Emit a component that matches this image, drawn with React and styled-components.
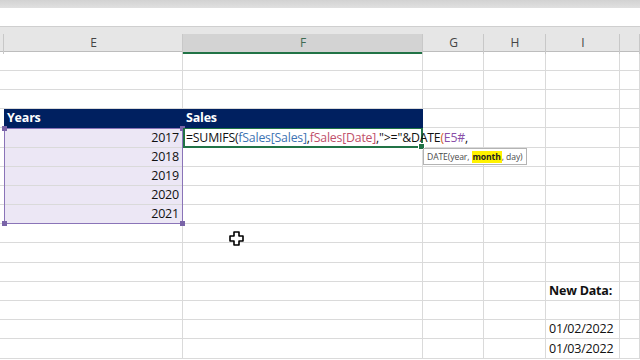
import React from 'react';
import styled, { createGlobalStyle } from 'styled-components';

const GlobalStyle = createGlobalStyle`
  html, body {
    margin: 0;
    padding: 0;
    background: #ffffff;
    overflow: hidden;
  }
  body {
    font-family: "Open Sans", "Liberation Sans", sans-serif;
  }
`;

const COLS = '4px 179px 240px 61px 62px 74px 1fr';
const ROW_HEIGHTS = [19, 19, 19, 19, 20, 19, 19, 19, 19, 19, 20, 19, 19, 19, 19, 20];

const Sheet = styled.div`
  position: relative;
  width: 640px;
  height: 360px;
  overflow: hidden;
  background: #ffffff;
`;

const Ribbon = styled.div`
  height: 8px;
  background: linear-gradient(#d2d2d2, #e0e0e0);
`;

const FormulaBand = styled.div`
  height: 18px;
  background: #ffffff;
  border-bottom: 1px solid #cfcfcf;
`;

const HeaderRow = styled.div`
  display: grid;
  grid-template-columns: ${COLS};
  height: 25px;
  background: #e6e6e6;
  border-bottom: 1px solid #bdbdbd;
  box-sizing: border-box;
`;

const ColHead = styled.div`
  position: relative;
  display: flex;
  align-items: flex-end;
  justify-content: center;
  padding-bottom: 3px;
  font-size: 12px;
  color: ${p => (p.active ? '#3f6b52' : '#444444')};
  background: ${p => (p.active ? '#d3d3d3' : 'transparent')};
  box-shadow: ${p => (p.active ? 'inset 0 -2px 0 #217346' : 'none')};
  margin-top: ${p => (p.active ? '7px' : '0')};

  &::after {
    content: '';
    position: absolute;
    right: 0;
    top: ${p => (p.active ? '0' : '7px')};
    bottom: 0;
    width: 1px;
    background: #c8c8c8;
  }
`;

const Row = styled.div`
  display: grid;
  grid-template-columns: ${COLS};
  height: ${p => p.h}px;
`;

const Cell = styled.div`
  box-sizing: border-box;
  border-right: 1px solid #dadada;
  border-bottom: 1px solid #dadada;
  display: flex;
  align-items: flex-end;
  justify-content: ${p => (p.right ? 'flex-end' : 'flex-start')};
  padding: 0 3px 1px 3px;
  font-size: 12.5px;
  letter-spacing: -0.2px;
  line-height: 16px;
  color: #111111;
  white-space: nowrap;
  background: ${p => (p.sel ? '#ece7f5' : '#ffffff')};
  font-weight: ${p => (p.bold ? 700 : 400)};
`;

const HeadCell = styled(Cell)`
  background: #002060;
  color: #ffffff;
  font-weight: 700;
  border-right-color: #002060;
  border-bottom-color: #002060;
`;

const EditCell = styled(Cell)`
  overflow: visible;
  position: relative;
  z-index: 3;
  border: 2px solid #217346;
  border-top-width: 1px;
  padding: 0 0 0 1px;
  font-size: 12.3px;
  letter-spacing: -0.2px;
  background: transparent;
`;

const Tok = styled.span`
  color: ${p => p.c || '#111111'};
`;

const Selection = styled.div`
  position: absolute;
  left: 4px;
  top: 128px;
  width: 179px;
  height: 96px;
  box-sizing: border-box;
  border: 1.5px solid #8a74b8;
  z-index: 2;
  pointer-events: none;
`;

const Handle = styled.span`
  position: absolute;
  width: 5px;
  height: 5px;
  background: #7a64a8;
  ${p => (p.top ? 'top: -3px;' : 'bottom: -3px;')}
  ${p => (p.left ? 'left: -3px;' : 'right: -3px;')}
`;

const CellHandle = styled.span`
  position: absolute;
  right: -4px;
  bottom: -4px;
  width: 5px;
  height: 5px;
  background: #217346;
  border: 1px solid #ffffff;
`;

const Tip = styled.div`
  position: absolute;
  left: 423px;
  top: 148px;
  height: 15px;
  padding: 0 3px;
  display: flex;
  align-items: center;
  background: #ffffff;
  border: 1px solid #b4b4b4;
  font-size: 8.6px;
  letter-spacing: -0.1px;
  color: #4a4a4a;
  white-space: pre;
  z-index: 4;
`;

const Mark = styled.b`
  background: #fff200;
  color: #222222;
  padding: 0 1px;
`;

const Cursor = styled.svg`
  position: absolute;
  left: 229px;
  top: 231px;
  z-index: 5;
`;

const years = [2017, 2018, 2019, 2020, 2021];

const blank = () => (
  <>
    <Cell />
    <Cell />
    <Cell />
    <Cell />
    <Cell />
    <Cell />
    <Cell />
  </>
);

export default function App() {
  const rows = ROW_HEIGHTS.map((h, i) => {
    if (i === 3) {
      return (
        <Row key={i} h={h}>
          <Cell />
          <HeadCell>Years</HeadCell>
          <HeadCell>Sales</HeadCell>
          <Cell />
          <Cell />
          <Cell />
          <Cell />
        </Row>
      );
    }
    if (i >= 4 && i <= 8) {
      const y = years[i - 4];
      return (
        <Row key={i} h={h}>
          <Cell />
          <Cell sel right>{y}</Cell>
          {i === 4 ? (
            <EditCell>
              <Tok>=SUMIFS(</Tok>
              <Tok c="#3d73b3">fSales[Sales]</Tok>
              <Tok>,</Tok>
              <Tok c="#c0506a">fSales[Date]</Tok>
              <Tok>,"&gt;="&amp;DATE</Tok>
              <Tok c="#d05a2a">(</Tok>
              <Tok c="#8a4fa8">E5#</Tok>
              <Tok>,</Tok>
              <CellHandle />
            </EditCell>
          ) : (
            <Cell />
          )}
          <Cell />
          <Cell />
          <Cell />
          <Cell />
        </Row>
      );
    }
    if (i === 12) {
      return (
        <Row key={i} h={h}>
          <Cell />
          <Cell />
          <Cell />
          <Cell />
          <Cell />
          <Cell bold>New Data:</Cell>
          <Cell />
        </Row>
      );
    }
    if (i === 14 || i === 15) {
      return (
        <Row key={i} h={h}>
          <Cell />
          <Cell />
          <Cell />
          <Cell />
          <Cell />
          <Cell>{i === 14 ? '01/02/2022' : '01/03/2022'}</Cell>
          <Cell />
        </Row>
      );
    }
    return (
      <Row key={i} h={h}>
        {blank()}
      </Row>
    );
  });

  return (
    <Sheet>
      <GlobalStyle />
      <Ribbon />
      <FormulaBand />
      <HeaderRow>
        <ColHead />
        <ColHead>E</ColHead>
        <ColHead active>F</ColHead>
        <ColHead>G</ColHead>
        <ColHead>H</ColHead>
        <ColHead>I</ColHead>
        <ColHead />
      </HeaderRow>
      {rows}
      <Selection>
        <Handle top left />
        <Handle top />
        <Handle left />
        <Handle />
      </Selection>
      <Tip>
        DATE(year, <Mark>month</Mark>, day)
      </Tip>
      <Cursor width="15" height="15" viewBox="0 0 15 15">
        <path
          d="M5 1h5v4h4v5h-4v4h-5v-4h-4v-5h4z"
          fill="#ffffff"
          stroke="#000000"
          strokeWidth="1.6"
          strokeLinejoin="round"
        />
      </Cursor>
    </Sheet>
  );
}
